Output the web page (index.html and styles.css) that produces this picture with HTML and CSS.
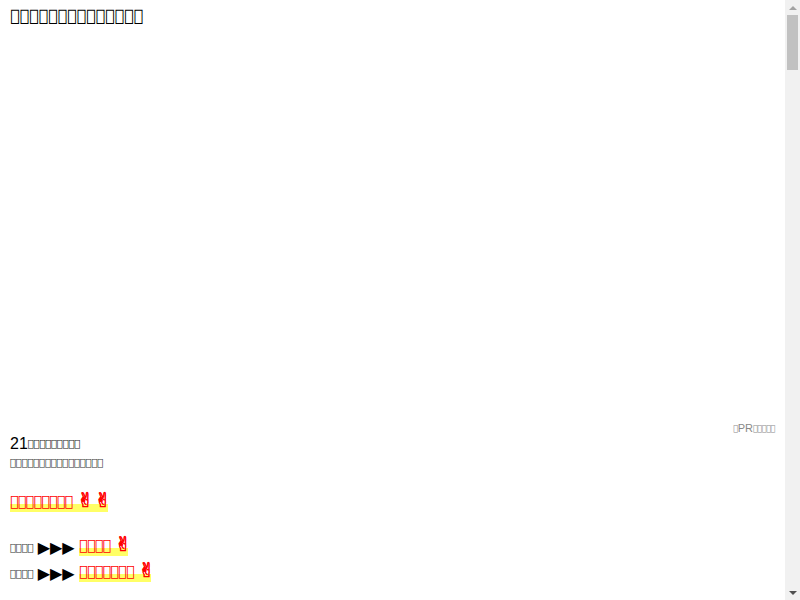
FILE: index.html
```html
<!DOCTYPE html>
<html lang="ja">
<head>
<meta charset="utf-8">
<title>&#xE000;&#xE001;&#xE002;&#xE003;</title>
<link rel="stylesheet" href="styles.css">
</head>
<body>
<div class="page">
  <h1 class="site-title"><span class="ja">&#xE000;&#xE001;&#xE002;&#xE003;&#xE004;&#xE005;&#xE006;&#xE007;&#xE008;&#xE009;&#xE00A;&#xE00B;&#xE00C;&#xE00D;</span></h1>
  <div class="ad-space"></div>
  <p class="pr"><span class="ja">&#xE010;</span>PR<span class="ja">&#xE011;&#xE012;&#xE013;&#xE014;&#xE015;</span></p>
  <p class="lead">21<span class="ja">&#xE020;&#xE021;&#xE022;&#xE023;&#xE024;&#xE025;&#xE026;&#xE027;&#xE028;</span></p>
  <p class="sub"><span class="ja">&#xE030;&#xE031;&#xE032;&#xE033;&#xE034;&#xE035;&#xE036;&#xE037;&#xE038;&#xE039;&#xE03A;&#xE03B;&#xE03C;&#xE03D;&#xE03E;&#xE03F;</span></p>
  <p class="catch"><a class="marker" href="#"><span class="ja">&#xE040;&#xE041;&#xE042;&#xE043;&#xE044;&#xE045;&#xE046;&#xE047;</span> <span class="hand">✌</span> <span class="hand">✌</span></a></p>
  <ul class="links">
    <li><span class="label ja">&#xE050;&#xE051;&#xE052;&#xE053;</span> <span class="arrows">▶▶▶</span> <a class="marker" href="#"><span class="ja">&#xE054;&#xE055;&#xE056;&#xE057;</span> <span class="hand">✌</span></a></li>
    <li><span class="label ja">&#xE050;&#xE051;&#xE052;&#xE053;</span> <span class="arrows">▶▶▶</span> <a class="marker" href="#"><span class="ja">&#xE058;&#xE059;&#xE05A;&#xE05B;&#xE05C;&#xE05D;&#xE05E;</span> <span class="hand">✌</span></a></li>
  </ul>
  <div class="more"></div>
</div>
<div class="scrollbar" aria-hidden="true">
  <div class="sb-btn"><span class="sb-up"></span></div>
  <div class="sb-track"><div class="sb-thumb"></div></div>
  <div class="sb-btn"><span class="sb-down"></span></div>
</div>
</body>
</html>
```
FILE: styles.css
```css
html, body {
  margin: 0;
  padding: 0;
}
body {
  font-family: "Liberation Sans", Arial, sans-serif;
  color: #000;
  background: #fff;
}
.page {
  padding: 0 25px 0 10px;
}
.ja {
  font-family: "DejaVu Sans", sans-serif;
  line-height: 0.5;
  vertical-align: 0.18em;
}
.site-title {
  margin: 0;
  padding-top: 7px;
  font-size: 20px;
  font-weight: normal;
  line-height: 20px;
  color: #000;
}
.site-title .ja {
  font-size: 16.2px;
  letter-spacing: -0.22px;
}
.ad-space {
  height: 394px;
}
.pr {
  margin: 0;
  text-align: right;
  font-size: 11px;
  color: #888;
  line-height: 14px;
}
.pr .ja {
  font-size: 8.2px;
  letter-spacing: -0.5px;
}
.lead {
  margin: 0;
  font-size: 16px;
  line-height: 18px;
}
.lead .ja {
  font-size: 10.2px;
  letter-spacing: -0.3px;
  color: #222;
}
.sub {
  margin: 0;
  font-size: 12px;
  color: #333;
  line-height: 22px;
}
.sub .ja {
  font-size: 10.2px;
  letter-spacing: -0.3px;
}
.catch {
  margin: 17px 0 0;
  font-size: 16px;
  line-height: 24px;
}
.marker {
  color: #ff0000;
  text-decoration: none;
  background: linear-gradient(transparent 55%, #ffff66 55%);
}
.marker .ja {
  font-size: 14.5px;
  letter-spacing: -0.9px;
}
.hand {
  font-family: "DejaVu Sans", sans-serif;
  font-weight: bold;
  font-size: 20px;
  line-height: 16px;
  letter-spacing: -3.5px;
  vertical-align: 2px;
  -webkit-text-stroke: 0.6px #ff0000;
}
.links {
  list-style: none;
  margin: 19px 0 0;
  padding: 0;
}
.links li {
  line-height: 26px;
  font-size: 16px;
}
.label {
  font-size: 10.2px;
  letter-spacing: -0.3px;
  color: #333;
}
.arrows {
  font-family: "DejaVu Sans", sans-serif;
  font-size: 16px;
  line-height: 1;
}
.more {
  height: 5600px;
}
.scrollbar {
  position: fixed;
  top: 0;
  right: 0;
  width: 15px;
  height: 100%;
  background: #f1f1f1;
  display: flex;
  flex-direction: column;
}
.sb-btn {
  height: 15px;
  flex: none;
  display: flex;
  align-items: center;
  justify-content: center;
}
.sb-up {
  border-left: 4px solid transparent;
  border-right: 4px solid transparent;
  border-bottom: 4px solid #a3a3a3;
}
.sb-down {
  border-left: 4px solid transparent;
  border-right: 4px solid transparent;
  border-top: 4px solid #505050;
}
.sb-track {
  flex: 1;
  padding: 0 2px;
}
.sb-thumb {
  height: 55px;
  background: #c1c1c1;
}
```
